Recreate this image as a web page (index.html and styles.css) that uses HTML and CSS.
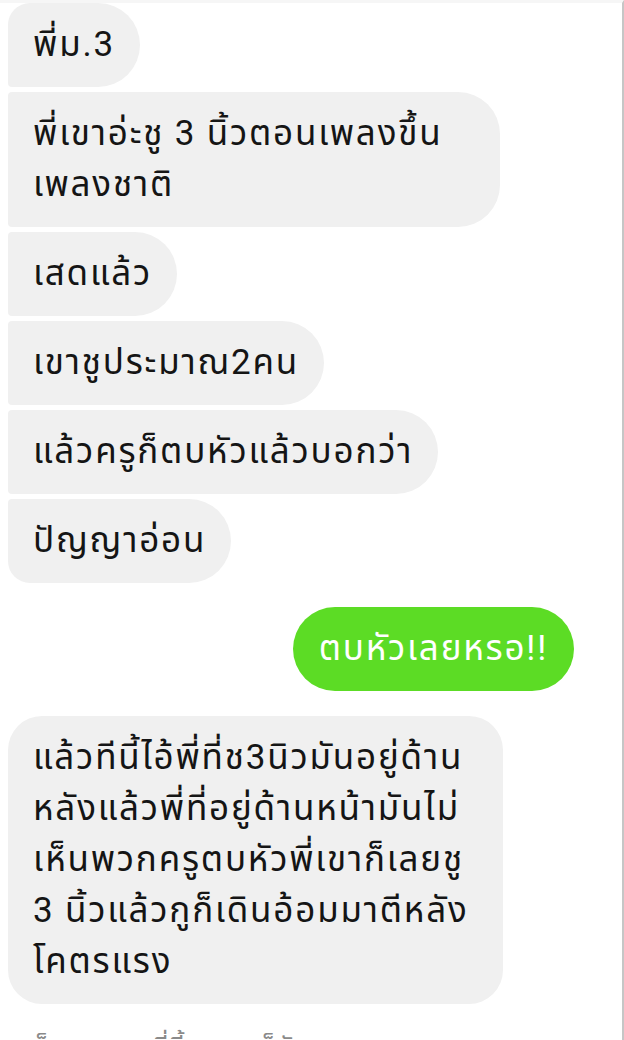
FILE: index.html
```html
<!DOCTYPE html>
<html lang="th">
<head>
    <meta charset="UTF-8">
    <meta name="viewport" content="width=device-width, initial-scale=1.0">
    <title>แชท</title>
    <link rel="stylesheet" href="styles.css">
</head>
<body>

<div class="screen">
    <div class="group">
        <div class="msg in first">พี่ม.3</div>
        <div class="msg in wrapped">พี่เขาอ่ะชู 3 นิ้วตอนเพลงขึ้น<br>เพลงชาติ</div>
        <div class="msg in">เสดแล้ว</div>
        <div class="msg in">เขาชูประมาณ2คน</div>
        <div class="msg in">แล้วครูก็ตบหัวแล้วบอกว่า</div>
        <div class="msg in last">ปัญญาอ่อน</div>
    </div>

    <div class="group out-group">
        <div class="msg out">ตบหัวเลยหรอ!!</div>
    </div>

    <div class="group">
        <div class="msg in single">แล้วทีนี้ไอ้พี่ที่ช3นิวมันอยู่ด้าน<br>หลังแล้วพี่ที่อยู่ด้านหน้ามันไม่<br>เห็นพวกครูตบหัวพี่เขาก็เลยชู<br>3 นิ้วแล้วกูก็เดินอ้อมมาตีหลัง<br>โคตรแรง</div>
    </div>

    <div class="note">ก็เลยแบบ...ที่นี้พวกครูก็หันมา</div>
</div>

</body>
</html>
```

FILE: styles.css
```css
body {
    margin: 0;
    background-color: #fff;
    font-family: Roboto, "Noto Sans Thai", "Noto Sans", sans-serif;
    overflow: hidden;
}
.screen {
    width: 624px;
    height: 1040px;
    box-sizing: border-box;
    border-right: 2px solid #c6c6c6;
    border-top: 3px solid #f6f6f6;
    padding: 0 0 0 8px;
    overflow: hidden;
}
.group {
    display: flex;
    flex-direction: column;
    align-items: flex-start;
    gap: 5px;
    margin-bottom: 24px;
}
.out-group {
    align-items: flex-end;
    padding-right: 48px;
    margin-bottom: 25px;
}
.msg {
    font-size: 35px;
    line-height: 51px;
    letter-spacing: 1.8px;
    padding: 16px 25px 17px;
    color: #151515;
}
.msg.in {
    background-color: #f0f0f0;
    border-radius: 4px 42px 42px 4px;
}
.msg.in.first {
    border-top-left-radius: 22px;
}
.msg.in.last {
    border-bottom-left-radius: 22px;
}
.msg.in.wrapped {
    padding-right: 58px;
}
.msg.in.single {
    border-radius: 34px;
    padding-right: 34px;
}
.msg.out {
    background-color: #5cdc25;
    color: #fff;
    border-radius: 42px;
    padding: 16px 26px 17px;
}
.note {
    font-size: 26px;
    line-height: 36px;
    color: #8a8a8a;
    padding: 1px 25px 0;
    white-space: nowrap;
}
```
